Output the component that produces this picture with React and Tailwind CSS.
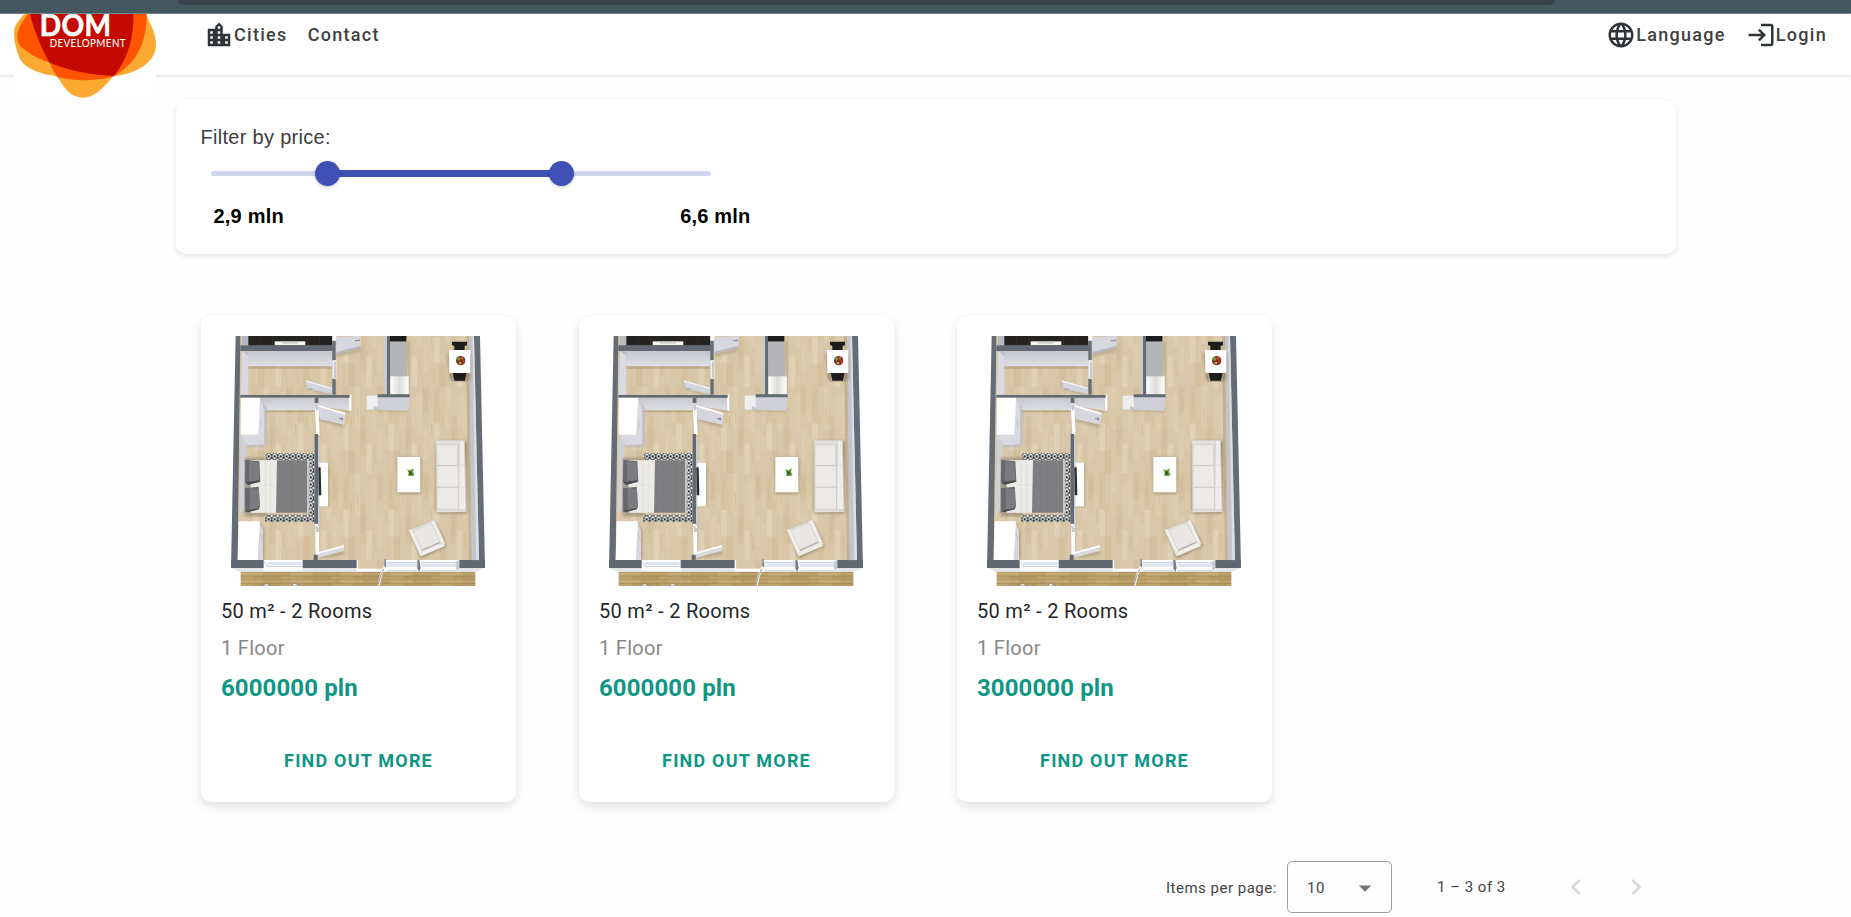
import React from "react";
import { MdLocationCity, MdLanguage, MdLogin, MdChevronLeft, MdChevronRight, MdArrowDropDown } from "react-icons/md";

const apartments = [
  { id: "a", title: "50 m² - 2 Rooms", floor: "1 Floor", price: "6000000 pln" },
  { id: "b", title: "50 m² - 2 Rooms", floor: "1 Floor", price: "6000000 pln" },
  { id: "c", title: "50 m² - 2 Rooms", floor: "1 Floor", price: "3000000 pln" },
];

function Logo() {
  return (
    <svg viewBox="42 42 426 258" className="block h-[86px] w-[142px] bg-white">
      <path fill="#fba930" d="M74 42C55 60 42 78 42 98C42 125 50 150 55 165C67 205 120 222 170 229C190 255 205 293 250 293C290 293 320 250 341 228C400 225 468 190 468 135C468 100 450 70 438 42Z" />
      <path fill="#ff5400" d="M84 42C70 60 52 85 52 110C53 125 57 135 65 142C95 168 125 180 148 187C155 200 160 215 172 230C215 243 290 245 341 229C410 190 440 130 440 42Z" />
      <path fill="#c40a00" d="M90 42C100 85 120 135 147 187C200 212 280 226 342 228C385 175 402 110 400 42Z" />
      <path fill="none" stroke="#e8820e" strokeWidth="2" d="M65 142C58 136 53 125 52 110" />
      <text x="119" y="108" fill="#fff" stroke="#fff" strokeWidth="2" fontFamily="Lato, sans-serif" fontWeight="700" fontSize="92" textLength="215" lengthAdjust="spacingAndGlyphs">DOM</text>
      <text x="149" y="141" fill="#fff" fontFamily="Lato, sans-serif" fontWeight="500" fontSize="34" textLength="229" lengthAdjust="spacingAndGlyphs">DEVELOPMENT</text>
    </svg>
  );
}

function FloorPlan({ id }) {
  const floor = `url(#floor-${id})`;
  const deck = `url(#deck-${id})`;
  const rug = `url(#rug-${id})`;
  const wall = `url(#wall-${id})`;
  return (
    <svg viewBox="122 108 762 750" preserveAspectRatio="none" className="block h-[250px] w-[254px]">
      <defs>
        <pattern id={`floor-${id}`} width="136" height="260" patternUnits="userSpaceOnUse">
          <rect width="136" height="260" fill="#d8c7a8" />
          <rect x="0" y="20" width="17" height="120" fill="#ddcdaf" />
          <rect x="17" y="0" width="17" height="80" fill="#d4c1a0" />
          <rect x="17" y="130" width="17" height="90" fill="#dccbad" />
          <rect x="34" y="60" width="17" height="130" fill="#dbcaab" />
          <rect x="51" y="0" width="17" height="110" fill="#d6c4a3" />
          <rect x="51" y="110" width="17" height="80" fill="#e1d2b7" />
          <rect x="68" y="40" width="17" height="100" fill="#d9c8a7" />
          <rect x="68" y="190" width="17" height="70" fill="#d4c09d" />
          <rect x="85" y="0" width="17" height="130" fill="#dccdaf" />
          <rect x="102" y="90" width="17" height="120" fill="#d4c2a0" />
          <rect x="119" y="30" width="17" height="90" fill="#dbcaac" />
          <rect x="119" y="170" width="17" height="90" fill="#e0d1b5" />
          <path d="M0 0V260M17 0V260M34 0V260M51 0V260M68 0V260M85 0V260M102 0V260M119 0V260" stroke="#c9b38a" strokeWidth="1" opacity=".4" />
          <path d="M25 20l2 40M59 20l-2 60M93 60l2 50M110 130l-2 50M43 110l1 40M8 180l2 50M76 90l-2 30" stroke="#c4a678" strokeWidth="2" opacity=".6" />
        </pattern>
        <pattern id={`deck-${id}`} width="150" height="22" patternUnits="userSpaceOnUse" y="816">
          <rect width="150" height="22" fill="#bfa26b" />
          <rect width="70" height="11" fill="#c9ad78" />
          <rect x="40" y="11" width="80" height="11" fill="#b59862" />
          <path d="M0 .5H150M0 11.5H150" stroke="#8f7546" strokeWidth="1.5" />
          <path d="M70 0V11M120 11V22" stroke="#8f7546" />
        </pattern>
        <pattern id={`rug-${id}`} x="226" y="459" width="18" height="21" patternUnits="userSpaceOnUse">
          <rect width="18" height="21" fill="#23272b" />
          <path d="M9 2L15 10L9 18L3 10Z" fill="none" stroke="#f2f2f2" strokeWidth="3.4" />
          <path d="M0 0L4 4M18 0L14 4M0 21L4 17M18 21L14 17" stroke="#f2f2f2" strokeWidth="3.6" />
        </pattern>
        <linearGradient id={`wall-${id}`} x1="0" x2="0" y1="0" y2="1">
          <stop offset="0" stopColor="#c6c7cd" />
          <stop offset="1" stopColor="#dfe0e5" />
        </linearGradient>
        <linearGradient id={`steel-${id}`}>
          <stop offset="0" stopColor="#fff" />
          <stop offset=".5" stopColor="#dbdcd8" />
          <stop offset="1" stopColor="#fff" />
        </linearGradient>
        <filter id={`soft-${id}`} x="-30%" y="-30%" width="160%" height="160%">
          <feGaussianBlur stdDeviation="4" />
        </filter>
      </defs>

      <path fill="#fff" d="M122 108H884V858H122Z" />
      <path fill="#e3e4e8" d="M122 803H884L855 817H150Z" />
      <path fill={deck} d="M151 816H855V858H151Z" />
      <path fill="#646d76" d="M136 108H869L884 804H122Z" />
      <path fill={floor} d="M150 108H838L844 780H142Z" />

      {/* outer right wall */}
      <path fill="#c4c5cc" d="M836 108H851L866 781H843Z" />
      <path fill="#a6906b" opacity=".4" d="M826 108H836L843 781H836Z" />
      <path fill="#dddee3" d="M846 108H851L866 781H858Z" />

      {/* dark room */}
      <path fill="#b8bac1" d="M155 108H178V136H155Z" />
      <path fill="#242322" d="M174 108H426V137H174Z" />
      <path stroke="#393431" strokeWidth="2" d="M210 108V136M247 108V136M352 108V136M388 108V136" />
      <path fill="#f5f5f2" d="M253 124H345V136H253Z" />
      <path fill="#cbcac4" d="M275 127H322V131H275Z" />
      <path fill="#626970" d="M150 136H434V153H150Z" />

      {/* storage room */}
      <path fill="#bfc0c7" d="M154 153H426V199H174V284H152Z" />
      <path fill={wall} d="M174 153H426V199H174Z" />
      <path fill="#dadbe0" d="M155 153L174 168V284H152Z" />
      <path fill="#9d8967" opacity=".45" d="M174 199H426V206H174Z" />
      <path fill="#666e76" d="M426 120H436V284H426Z" />
      <path fill="#fff" d="M426 108H438V122H426ZM426 181H438V236H426Z" />
      <path fill="#c9cad1" d="M430 187L437 182V234H430Z" />
      <path fill="#b2a283" filter={`url(#soft-${id})`} opacity=".7" d="M350 268L424 290V280L350 255Z" />
      <path fill="#d3d4dc" stroke="#b5b6bf" d="M346 241L425 263V283L351 267Z" />
      <path fill="#f6f6f8" d="M346 241L425 263V267L347 245Z" />
      <path stroke="#77787d" strokeWidth="2" d="M354 267H367" />

      {/* entry door */}
      <path fill="#b2a283" filter={`url(#soft-${id})`} opacity=".8" d="M438 158L511 144V154L438 170Z" />
      <path fill="#d6d7df" d="M438 112L511 108V141L438 161Z" />
      <path fill="#b7b8c1" d="M438 156L511 137V143L438 162Z" />
      <path stroke="#575a60" strokeWidth="2" d="M494 122H507V118" fill="none" />

      {/* kitchen strip */}
      <path fill="#cacbd1" d="M583 108H590V286H583Z" />
      <path fill="#646d75" d="M590 108H600V286H590Z" />
      <path fill="#b2a283" opacity=".4" d="M648 125H659V280H655Z" />
      <path fill="#1b1b1c" d="M599 108H648V125H599Z" />
      <path fill="#b4b5b8" d="M600 125H650V229H600Z" />
      <path fill={`url(#steel-${id})`} d="M600 229H655V283H600Z" />

      {/* corridor walls */}
      <path fill="#b2a283" filter={`url(#soft-${id})`} opacity=".7" d="M386 324L484 337V327H386ZM530 330L655 337V325H530Z" />
      <path fill={wall} d="M383 293L478 291L483 332L388 318Z" />
      <path fill="#fff" d="M476 284H483V333L477 330Z" />
      <path fill="#d0d1d8" d="M562 291H658L654 332L552 329Z" />
      <path fill="#eeeef1" d="M529 287H562V329H529Z" />
      <path fill="#c5c6cf" d="M551 317L563 323V330L551 329Z" />
      <path fill="#626a72" d="M150 285H478V293H150ZM562 283H658V292H562Z" />

      {/* bedroom */}
      <path fill={wall} d="M207 293H378V331H224Z" />
      <path fill="#9d8967" opacity=".45" d="M222 331H378V337H222Z" />
      <path fill="#cfd1d8" d="M151 405L168 435V480L163 620L150 645Z" />
      <path fill="#b9b9c3" filter={`url(#soft-${id})`} d="M215 310L228 325V432L218 440H170Z" />
      <path fill="#d9dae1" d="M207 293L222 328V433L172 436L151 404L204 403Z" />
      <path fill="#fff" d="M152 293H209L204 404H151Z" />
      <path fill="#c3c4cc" d="M211 359L214 363V380L211 383Z" />

      <path fill={rug} d="M226 459H372V665H225V644H355V480H228Z" />
      <path fill="#837158" filter={`url(#soft-${id})`} opacity=".7" d="M164 474H230V482H164ZM164 638H230V648H164Z" />
      <path fill="#a19c94" d="M163 477H180V639H161Z" />
      <path fill="#ecebe8" d="M182 481H260V638H182Z" />
      <path stroke="#dddbd7" strokeWidth="2" d="M225 485V637M241 485V637M207 555L250 554" />
      <path fill="#7e7e80" d="M260 481H351V638H257Z" />
      <path stroke="#868688" strokeWidth="3" strokeDasharray="5 4" d="M275 485V634M294 484V637M314 485V634M334 484V636" />
      <path fill="#c8c6c2" d="M350 480H357V640H350Z" />
      <path fill="#66676a" d="M165 480L207 484L210 546L174 553L164 546ZM164 565L205 560L209 622L165 636Z" />
      <path fill="#7b7c80" d="M176 483L204 487L207 541L176 547ZM178 563L206 568L208 623L178 629Z" />
      <path fill="#4a4b4e" d="M165 547L205 541V546L173 555ZM165 633L206 623V628L173 637Z" />

      <path fill="#9d8967" filter={`url(#soft-${id})`} opacity=".6" d="M205 666L222 690V778H212Z" />
      <path fill="#d5d6de" d="M204 664L218 690V780H200Z" />
      <path fill="#fff" d="M145 664H209L202 780H142Z" />
      <path stroke="#b8b9c2" strokeWidth="2" d="M208 698L217 722" />

      {/* bedroom / living room partition */}
      <path fill="#fff" d="M373 308H384L388 404H378ZM374 672H386V765H376Z" />
      <path fill="#c9cad0" d="M382 414H389V678H382ZM373 313H384V327L377 334ZM374 676L386 684V696H377Z" />
      <path fill="#626a72" d="M373 402H383V671H372ZM373 293H384V310H373ZM370 764H382V782H370Z" />
      <path fill="#9f8d6c" filter={`url(#soft-${id})`} opacity=".65" d="M390 363L463 382V373L390 352ZM388 776L461 763V752L388 767Z" />
      <path fill="#d5d6de" d="M384 316L466 341L462 374L389 358Z" />
      <path fill="#fff" d="M384 315L466 339L465 344L384 320Z" />
      <path stroke="#595b63" strokeWidth="2" d="M446 355L459 358M455 352V361" />
      <path fill="#d8d8df" d="M384 757L461 736V752L384 773Z" />
      <path fill="#fafafc" d="M384 756L461 735V741L384 762Z" />

      {/* tv shelf */}
      <path fill="#a38f6c" filter={`url(#soft-${id})`} opacity=".6" d="M391 494H417V620H391Z" />
      <path fill="#fff" d="M387 488H413V619H387Z" />
      <path fill="#2c2c31" d="M384 502H391L393 586H385Z" />

      {/* dining corner */}
      <path fill="#927e5c" filter={`url(#soft-${id})`} opacity=".55" d="M770 160H842V240H778Z" />
      <path fill="#1d1d1e" d="M785 125H830V135L823 139V150H792V138L785 135Z" />
      <path fill="none" stroke="#8a8276" strokeWidth="2" d="M780 219L785 243H830L836 219" />
      <path fill="#1d1d1e" d="M787 217H829L824 242H792Z" />
      <path fill="#fff" d="M776 150H840V219H777Z" />
      <circle cx="811" cy="182" r="14" fill="#783128" />
      <circle cx="805" cy="177" r="5" fill="#6e9d2f" />
      <circle cx="815" cy="175" r="4" fill="#e1572c" />
      <circle cx="819" cy="184" r="4" fill="#c62f22" />
      <circle cx="809" cy="189" r="4" fill="#e0a72e" />
      <circle cx="811" cy="182" r="3" fill="#384e1d" />

      {/* coffee table */}
      <path fill="#8d7a59" filter={`url(#soft-${id})`} opacity=".75" d="M622 473H692V581H622Z" />
      <path fill="#fff" d="M621 471H690V577H621Z" />
      <path fill="#68a33b" d="M650 508L659 511L671 505L668 516L673 524L667 529L653 527L655 518Z" />
      <path fill="#33601d" d="M656 514H665V524H656Z" />

      {/* sofa */}
      <path fill="#83704f" filter={`url(#soft-${id})`} opacity=".8" d="M738 424H829V640H738Z" />
      <path fill="#e3e1dd" stroke="#c8c5bf" d="M737 421H823L828 636L738 637Z" />
      <path fill="#eceae7" stroke="#cac7c2" strokeWidth="2" d="M740 434H802V496H740ZM740 497H805V561H740ZM740 562H805V628H740Z" />
      <path fill="#d9d6d1" d="M800 434H808V625H804Z" />
      <path fill="#eeedeb" stroke="#c9c6c0" strokeWidth="2" d="M807 421H822L827 629H805Z" />
      <path stroke="#c9c6c0" d="M807 495H824M806 562H826" />

      {/* armchair */}
      <path fill="#83704f" filter={`url(#soft-${id})`} opacity=".75" d="M658 694L734 664L768 738L692 775Z" />
      <path fill="#dfddd8" stroke="#c4c1bb" d="M655 690L731 660L765 737L691 769Z" />
      <path fill="#f0efed" stroke="#cfccc7" d="M655 690L666 688L697 757L691 769ZM722 663L732 660L765 732L753 732Z" />
      <path fill="#e9e7e4" stroke="#c7c4be" d="M668 693L721 669L749 724L695 748Z" />
      <path stroke="#a9a59e" strokeWidth="3" d="M695 751L750 727" />
      <path fill="#f1f0ee" stroke="#c9c6c0" d="M692 757L757 727L763 738L693 768Z" />

      {/* front wall with windows */}
      <path fill="#5f6770" d="M122 781H884V804H122Z" />
      <path fill="#fff" d="M220 780H337V812H220Z" />
      <path fill="#dce3ed" d="M230 786H334V796H230Z" />
      <path stroke="#b4bac5" strokeWidth="2" d="M220 783L230 800H337" fill="none" />
      <path fill="#fff" d="M499 780H807V814H499Z" />
      <path fill={floor} d="M503 780H583V806H503Z" />
      <path fill="#dce5ef" d="M591 790H680V800H591ZM694 791H798V801H694Z" />
      <path stroke="#adb5c2" strokeWidth="2" d="M588 787H685M692 788H804M590 812H680M694 812H801" />
      <path fill="#7a8089" d="M582 778H586L588 798L582 805ZM681 780H687L691 803L687 816L681 806Z" />
      <path fill="#c7cbd4" d="M796 785L806 780V812L797 808Z" />
      <path fill="none" stroke="#f3f3f3" strokeWidth="7" d="M583 800Q570 823 565 858" />
      <path fill="none" stroke="#77746c" strokeWidth="2" d="M580 807Q567 830 563 858" />
      <path fill="#eee" stroke="#575249" strokeWidth="1.5" d="M214 858L229 850L242 858ZM305 858L309 848L330 858Z" />
    </svg>
  );
}

function PriceFilter() {
  return (
    <section className="mx-auto mt-[25px] h-[154px] w-[1500px] rounded-[10px] bg-white pt-[23px] pl-[25px] shadow-[0_2px_5px_rgba(0,0,0,0.11)]">
      <p className="font-['Liberation_Sans',Arial,sans-serif] text-[20px] leading-7 tracking-[0.3px] text-[#3c3c3c]">Filter by price:</p>
      <div className="relative mt-[9px] ml-[10px] flex h-[27px] w-[500px] items-center">
        <div className="h-[5px] w-full rounded-full bg-[#d0d5ec]" />
        <div className="absolute left-[116px] h-[7px] w-[234px] bg-[#3f51b5]" />
        <span className="absolute left-[104px] size-[25px] rounded-full bg-[#3f51b5] shadow-[0_1px_3px_rgba(0,0,0,0.25)]" />
        <span className="absolute left-[338px] size-[25px] rounded-full bg-[#3f51b5] shadow-[0_1px_3px_rgba(0,0,0,0.25)]" />
      </div>
      <div className="mt-[15px] ml-[13px] flex w-[537px] justify-between font-['Liberation_Sans',Arial,sans-serif] text-[20px] leading-7 font-bold tracking-[0.2px] text-black">
        <span>2,9 mln</span>
        <span>6,6 mln</span>
      </div>
    </section>
  );
}

function ApartmentCard({ apartment }) {
  return (
    <article className="flex h-[486px] w-[315px] flex-col rounded-[10px] bg-white pt-[20px] shadow-[0_4px_10px_rgba(0,0,0,0.12)]">
      <div className="pl-[29.5px]">
        <FloorPlan id={apartment.id} />
      </div>
      <div className="flex flex-col pl-[20px]">
        <h2 className="mt-[11px] text-[20px] leading-7 tracking-[0.3px] text-[#262626]">{apartment.title}</h2>
        <p className="mt-[9px] text-[20px] leading-7 tracking-[0.3px] text-[#888]">{apartment.floor}</p>
        <p className="mt-[10px] text-[24px] leading-8 font-bold tracking-[0.1px] text-[#0f9685]">{apartment.price}</p>
      </div>
      <button className="mx-auto mt-[42px] h-[30px] text-[18px] leading-[30px] font-bold tracking-[1.2px] whitespace-nowrap text-[#0f9685]">FIND OUT MORE</button>
    </article>
  );
}

function Paginator() {
  return (
    <div className="mt-[59px] flex h-[52px] items-center pl-[1166px] text-[15px] tracking-[0.5px] text-[#444]">
      <span className="w-[121px] pt-[2px] whitespace-nowrap">Items per page:</span>
      <div className="flex h-[52px] w-[105px] items-center justify-between rounded-[5px] border border-[#9c9c9c] pt-[2px] pr-[11px] pl-[19px]">
        <span>10</span>
        <MdArrowDropDown className="size-[30px] text-[#757575]" />
      </div>
      <span className="ml-[45px] w-[68px] whitespace-nowrap">1 – 3 of 3</span>
      <MdChevronLeft className="ml-[55px] size-[32px] text-[#dadada]" />
      <MdChevronRight className="ml-[28px] size-[32px] text-[#dadada]" />
    </div>
  );
}

export default function App() {
  return (
    <div className="h-[917px] w-[1851px] overflow-hidden bg-[#fefefe] font-[Roboto,sans-serif]">
      <div className="flex h-[14px] justify-center border-b border-[#7b888e] bg-[#455861] pr-[118px]">
        <div className="h-[5px] w-[1377px] rounded-b-[10px] bg-[#38444c]" />
      </div>
      <header className="relative flex h-[61px] items-start justify-between bg-white pt-[6px] pr-[24px] pl-[204px] text-[18px] font-medium tracking-[1.3px] text-[#404040] shadow-[0_1px_3px_rgba(0,0,0,0.14)]">
        <div className="absolute top-0 left-[14px]">
          <Logo />
        </div>
        <nav className="flex h-[30px] items-center">
          <a className="flex items-center">
            <MdLocationCity className="size-[30px] text-[#2f3437]" />
            <span className="pb-[2px]">Cities</span>
          </a>
          <a className="ml-[20px] pb-[2px]">Contact</a>
        </nav>
        <nav className="flex h-[30px] items-center">
          <a className="flex items-center">
            <MdLanguage className="size-[30px] text-[#2f3437]" />
            <span className="pb-[2px]">Language</span>
          </a>
          <a className="ml-[20px] flex items-center">
            <MdLogin className="size-[30px] text-[#2f3437]" />
            <span className="pb-[2px]">Login</span>
          </a>
        </nav>
      </header>
      <main>
        <PriceFilter />
        <section className="mt-[62px] ml-[201px] flex gap-[63px]">
          {apartments.map((apartment) => (
            <ApartmentCard key={apartment.id} apartment={apartment} />
          ))}
        </section>
        <Paginator />
      </main>
    </div>
  );
}
